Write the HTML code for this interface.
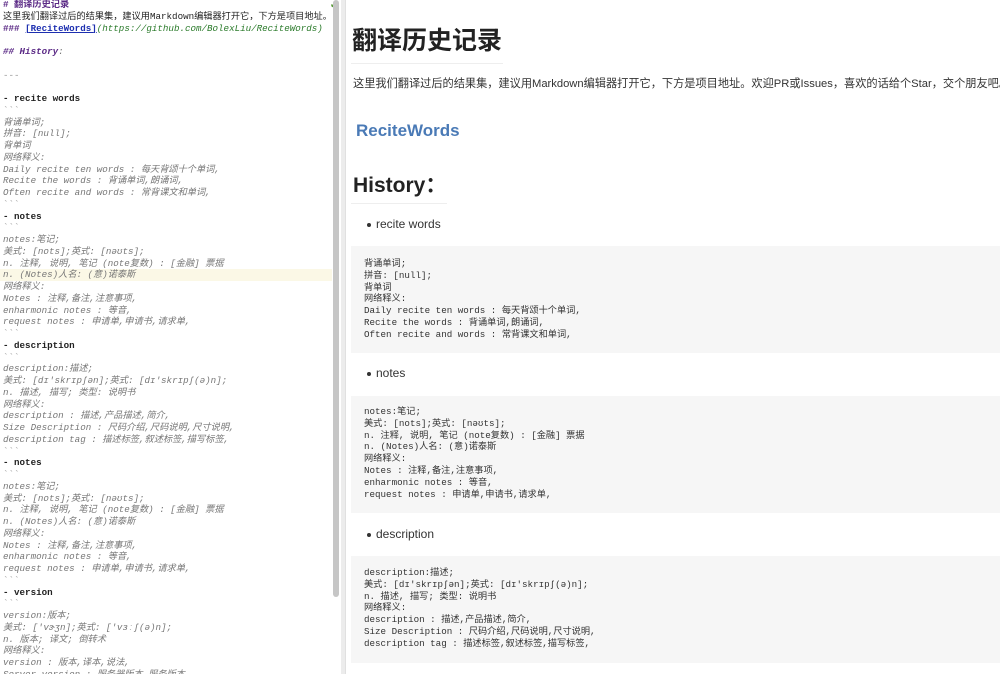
<!DOCTYPE html>
<html><head><meta charset="utf-8"><style>
*{margin:0;padding:0;box-sizing:border-box}
body{width:1000px;height:674px;overflow:hidden;background:#fff;position:relative;font-family:"Liberation Sans","Noto Sans CJK SC",sans-serif}
#left{position:absolute;left:0;top:0;width:332px;height:674px;overflow:hidden;font-family:"Liberation Mono","Noto Sans CJK SC",monospace;font-size:9.2px;line-height:11.75px;color:#222}
#left .l{height:11.75px;white-space:pre;padding-left:3px;position:relative}
.h{color:#5b2a86;font-weight:bold}
.hi{color:#5b2a86;font-weight:bold;font-style:italic}
.lk{color:#1d2fb0;text-decoration:underline;font-weight:bold}
.url{color:#2a7a2a;font-style:italic}
.g{color:#999}
.c{color:#777;font-style:italic}
.b{font-weight:bold;color:#222}
.hl{background:#fbf8e6}
#thumb{position:absolute;left:333px;top:0;width:6px;height:597px;background:#c6c6c6;border-radius:3px}
#div{position:absolute;left:341px;top:0;width:5px;height:674px;background:#ececec;border-right:1px solid #e0e0e0}
#right{position:absolute;left:347px;top:0;width:653px;height:674px;overflow:hidden;color:#333}
.abs{position:absolute;white-space:nowrap}
.pre{position:absolute;left:4px;width:660px;background:#f6f6f6;font-family:"Liberation Mono","Noto Sans CJK SC",monospace;font-size:9.2px;line-height:11.8px;color:#333;padding-left:13px;white-space:pre}
.li{font-size:12px;color:#333}
.li:before{content:"";display:inline-block;width:4px;height:4px;border-radius:50%;background:#333;margin-right:5px;vertical-align:middle}
</style></head><body>
<div id="left">
<div class="l" style="margin-top:-1px"><span class="h"># 翻译历史记录</span></div>
<div class="l">这里我们翻译过后的结果集，建议用Markdown编辑器打开它，下方是项目地址。欢迎</div>
<div class="l"><span class="h">###</span> <span class="lk">[ReciteWords]</span><span class="url">(https://github.com/BolexLiu/ReciteWords)</span></div>
<div class="l"></div>
<div class="l"><span class="hi">## History</span><span class="c">:</span></div>
<div class="l"></div>
<div class="l"><span class="g">---</span></div>
<div class="l"></div>
<div class="l"><span class="b">- recite words</span></div>
<div class="l"><span class="g">&#96;&#96;&#96;</span></div>
<div class="l c">背诵单词;</div>
<div class="l c">拼音: [null];</div>
<div class="l c">背单词</div>
<div class="l c">网络释义:</div>
<div class="l c">Daily recite ten words : 每天背颂十个单词,</div>
<div class="l c">Recite the words : 背诵单词,朗诵词,</div>
<div class="l c">Often recite and words : 常背课文和单词,</div>
<div class="l"><span class="g">&#96;&#96;&#96;</span></div>
<div class="l"><span class="b">- notes</span></div>
<div class="l"><span class="g">&#96;&#96;&#96;</span></div>
<div class="l c">notes:笔记;</div>
<div class="l c">美式: [nots];英式: [nəʊts];</div>
<div class="l c">n. 注释, 说明, 笔记 (note复数) : [金融] 票据</div>
<div class="l c hl">n. (Notes)人名: (意)诺泰斯</div>
<div class="l c">网络释义:</div>
<div class="l c">Notes : 注释,备注,注意事项,</div>
<div class="l c">enharmonic notes : 等音,</div>
<div class="l c">request notes : 申请单,申请书,请求单,</div>
<div class="l"><span class="g">&#96;&#96;&#96;</span></div>
<div class="l"><span class="b">- description</span></div>
<div class="l"><span class="g">&#96;&#96;&#96;</span></div>
<div class="l c">description:描述;</div>
<div class="l c">美式: [dɪ'skrɪpʃən];英式: [dɪ'skrɪpʃ(ə)n];</div>
<div class="l c">n. 描述, 描写; 类型: 说明书</div>
<div class="l c">网络释义:</div>
<div class="l c">description : 描述,产品描述,简介,</div>
<div class="l c">Size Description : 尺码介绍,尺码说明,尺寸说明,</div>
<div class="l c">description tag : 描述标签,叙述标签,描写标签,</div>
<div class="l"><span class="g">&#96;&#96;&#96;</span></div>
<div class="l"><span class="b">- notes</span></div>
<div class="l"><span class="g">&#96;&#96;&#96;</span></div>
<div class="l c">notes:笔记;</div>
<div class="l c">美式: [nots];英式: [nəʊts];</div>
<div class="l c">n. 注释, 说明, 笔记 (note复数) : [金融] 票据</div>
<div class="l c">n. (Notes)人名: (意)诺泰斯</div>
<div class="l c">网络释义:</div>
<div class="l c">Notes : 注释,备注,注意事项,</div>
<div class="l c">enharmonic notes : 等音,</div>
<div class="l c">request notes : 申请单,申请书,请求单,</div>
<div class="l"><span class="g">&#96;&#96;&#96;</span></div>
<div class="l"><span class="b">- version</span></div>
<div class="l"><span class="g">&#96;&#96;&#96;</span></div>
<div class="l c">version:版本;</div>
<div class="l c">美式: ['vɝʒn];英式: ['vɜːʃ(ə)n];</div>
<div class="l c">n. 版本; 译文; 倒转术</div>
<div class="l c">网络释义:</div>
<div class="l c">version : 版本,译本,说法,</div>
<div class="l c">Server version : 服务器版本,服务版本</div>
</div>
<div style="position:absolute;left:330px;top:0;color:#5a9a3a;font-size:10px">✔</div>
<div id="thumb"></div>
<div id="div"></div>
<div id="right">
<div class="abs" style="left:5px;top:24px;font-size:25px;font-weight:bold;line-height:34px;color:#222">翻译历史记录</div>
<div class="abs" style="left:4px;top:63px;width:152px;height:1px;background:#eee"></div>
<div class="abs" style="left:6px;top:76px;font-size:11.2px;line-height:16px;color:#333">这里我们翻译过后的结果集，建议用Markdown编辑器打开它，下方是项目地址。欢迎PR或Issues，喜欢的话给个Star，交个朋友吧。</div>
<div class="abs" style="left:9px;top:120px;font-size:17px;font-weight:bold;line-height:22px;color:#4a7ab6">ReciteWords</div>
<div class="abs" style="left:6px;top:173px;font-size:21px;font-weight:bold;line-height:26px;color:#222">History：</div>
<div class="abs" style="left:4px;top:203px;width:96px;height:1px;background:#eee"></div>
<div class="abs li" style="left:20px;top:217px">recite words</div>
<div class="pre" style="top:246px;height:107px;padding-top:12px">背诵单词;
拼音: [null];
背单词
网络释义:
Daily recite ten words : 每天背颂十个单词,
Recite the words : 背诵单词,朗诵词,
Often recite and words : 常背课文和单词,</div>
<div class="abs li" style="left:20px;top:366px">notes</div>
<div class="pre" style="top:396px;height:117px;padding-top:10px">notes:笔记;
美式: [nots];英式: [nəʊts];
n. 注释, 说明, 笔记 (note复数) : [金融] 票据
n. (Notes)人名: (意)诺泰斯
网络释义:
Notes : 注释,备注,注意事项,
enharmonic notes : 等音,
request notes : 申请单,申请书,请求单,</div>
<div class="abs li" style="left:20px;top:527px">description</div>
<div class="pre" style="top:556px;height:107px;padding-top:11px">description:描述;
美式: [dɪ'skrɪpʃən];英式: [dɪ'skrɪpʃ(ə)n];
n. 描述, 描写; 类型: 说明书
网络释义:
description : 描述,产品描述,简介,
Size Description : 尺码介绍,尺码说明,尺寸说明,
description tag : 描述标签,叙述标签,描写标签,</div>
</div>
</body></html>
